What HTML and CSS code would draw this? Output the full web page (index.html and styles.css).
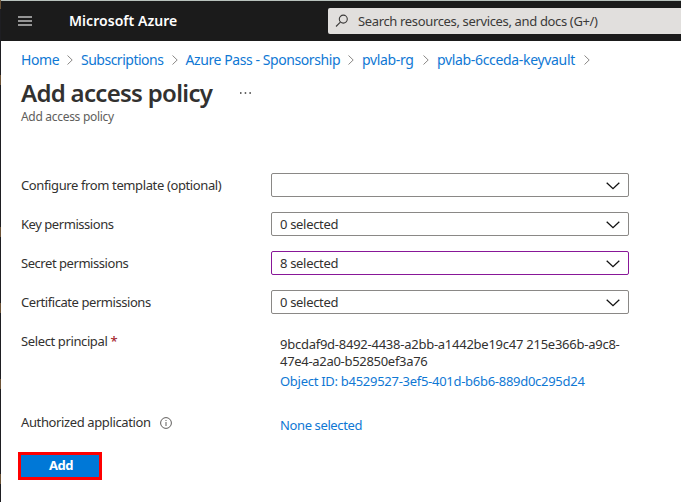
FILE: index.html
```html
<!DOCTYPE html>
<html lang="en">
<head>
<meta charset="utf-8">
<title>Add access policy - Microsoft Azure</title>
<link rel="stylesheet" href="styles.css">
</head>
<body>
<div class="edge"></div>
<div class="portal">
  <header class="topbar">
    <svg class="menu" width="14" height="10" viewBox="0 0 14 10"><path d="M0 0h14v2H0zM0 4h14v2H0zM0 8h14v2H0z" fill="#959595"/></svg>
    <div class="brand"><span>Microsoft Azure</span></div>
    <div class="search">
      <svg width="14" height="14" viewBox="0 0 14 14" fill="none" stroke="#3b3a39" stroke-width="1.1"><circle cx="8.3" cy="5.1" r="4"/><path d="M5.4 8.1 1 12.5"/></svg>
      <span>Search resources, services, and docs (G+/)</span>
    </div>
  </header>
  <nav class="crumbs">
    <a class="c1"><span>Home</span></a><svg class="sep" viewBox="0 0 6 10"><path d="m.5.5 4.7 4.5L.5 9.5"/></svg>
    <a class="c2"><span>Subscriptions</span></a><svg class="sep" viewBox="0 0 6 10"><path d="m.5.5 4.7 4.5L.5 9.5"/></svg>
    <a class="c3"><span>Azure Pass - Sponsorship</span></a><svg class="sep" viewBox="0 0 6 10"><path d="m.5.5 4.7 4.5L.5 9.5"/></svg>
    <a class="c4"><span>pvlab-rg</span></a><svg class="sep" viewBox="0 0 6 10"><path d="m.5.5 4.7 4.5L.5 9.5"/></svg>
    <a class="c5"><span>pvlab-6cceda-keyvault</span></a><svg class="sep" viewBox="0 0 6 10"><path d="m.5.5 4.7 4.5L.5 9.5"/></svg>
  </nav>
  <div class="heading">
    <h1><span>Add access policy</span></h1>
    <svg width="11" height="2" viewBox="0 0 11 2"><path d="M0 0h1.5v2H0zM4.7 0h1.5v2H4.7zM9.4 0h1.5v2H9.4z" fill="#666"/></svg>
  </div>
  <p class="subtitle"><span>Add access policy</span></p>
  <form class="form">
    <label class="l1"><span>Configure from template (optional)</span></label>
    <div class="select"><span></span><svg class="chev" viewBox="0 0 14 8"><path d="m.7.7 6.3 6 6.3-6"/></svg></div>
    <label class="l2"><span>Key permissions</span></label>
    <div class="select"><span>0 selected</span><svg class="chev" viewBox="0 0 14 8"><path d="m.7.7 6.3 6 6.3-6"/></svg></div>
    <label class="l3"><span>Secret permissions</span></label>
    <div class="select changed"><span>8 selected</span><svg class="chev" viewBox="0 0 14 8"><path d="m.7.7 6.3 6 6.3-6"/></svg></div>
    <label class="l4"><span>Certificate permissions</span></label>
    <div class="select"><span>0 selected</span><svg class="chev" viewBox="0 0 14 8"><path d="m.7.7 6.3 6 6.3-6"/></svg></div>
    <label class="l5"><span>Select principal</span> <b>*</b></label>
    <div class="principal">
      <div><span class="id1">9bcdaf9d-8492-4438-a2bb-a1442be19c47 215e366b-a9c8-</span></div>
      <div><span class="id2">47e4-a2a0-b52850ef3a76</span></div>
      <a><span class="id3">Object ID: b4529527-3ef5-401d-b6b6-889d0c295d24</span></a>
    </div>
    <label class="l6"><span>Authorized application</span>
      <svg class="info" width="12" height="12" viewBox="0 0 12 12"><circle cx="6" cy="6" r="5.4" fill="none" stroke="#605e5c"/><path d="M5.5 5h1v4h-1zM5.5 3h1v1.1h-1z" fill="#605e5c"/></svg>
    </label>
    <a class="none"><span>None selected</span></a>
  </form>
  <button class="add" type="button">Add</button>
</div>
</body>
</html>
```
FILE: styles.css
```css
* { box-sizing: border-box; }
body {
  margin: 0;
  width: 681px;
  height: 502px;
  overflow: hidden;
  display: flex;
  background: #fff;
  color: #323130;
  font: 13px/18px "Noto Sans", "Open Sans", sans-serif;
  letter-spacing: -.38px;
}
span { white-space: nowrap; }
/* sliver of the window behind the portal */
.edge {
  width: 1px;
  flex: none;
  background: linear-gradient(#6b5236 9px, #1e1e22 9px 75px, #6b5236 75px 85px, #1e1e22 85px 227px, #6b5236 227px 237px, #1e1e22 237px 303px, #6b5236 303px 313px, #1e1e22 313px 379px, #6b5236 379px 389px, #1e1e22 389px 474px, #6b5236 474px 484px, #1e1e22 484px);
}
.portal {
  flex: 1;
  min-width: 0;
  height: 502px;
  border-top: 1px solid #b8c2bd;
}
.topbar {
  height: 40px;
  display: flex;
  align-items: center;
  background: #1b1b1b;
}
.menu { margin-left: 17px; flex: none; }
.brand {
  margin-left: 37px;
  width: 259px;
  flex: none;
  color: #fff;
  font-size: 14px;
  font-weight: 600;
  letter-spacing: .05px;
}
.search {
  flex: 1;
  height: 26px;
  display: flex;
  align-items: center;
  padding-left: 7px;
  gap: 9px;
  background: #e1dfdd;
  color: #3b3a39;
  border-radius: 2px 0 0 2px;
  letter-spacing: -.35px;
}
.crumbs {
  height: 38px;
  padding-left: 20px;
  display: flex;
  align-items: center;
  font-size: 14px;
}
.crumbs a { flex: none; }
.c1 { width: 46px; }
.c2 { width: 90.5px; letter-spacing: -.5px; }
.c3 { width: 162.5px; letter-spacing: -.42px; }
.c4 { width: 61px; letter-spacing: -.33px; }
.c5 { width: 147px; letter-spacing: -.33px; }
.sep {
  width: 6px;
  height: 10px;
  margin-right: 8px;
  flex: none;
  fill: none;
  stroke: #8a8886;
}
a { color: #0f78d4; }
.heading {
  height: 28px;
  padding-left: 20px;
  display: flex;
  align-items: center;
}
h1 {
  margin: 0;
  width: 219px;
  font-size: 24px;
  line-height: 28px;
  font-weight: 600;
  letter-spacing: -.7px;
}
.subtitle {
  margin: 1px 0 0 20px;
  font-size: 12px;
  letter-spacing: -.3px;
  color: #605e5c;
}
.form {
  margin: 47px 0 0 20px;
  display: grid;
  grid-template-columns: 250px 358px;
  grid-template-rows: 24px 24px 24px 24px 66px 24px;
  row-gap: 15px;
}
label { line-height: 24px; }
label b { color: #a4262c; font-weight: 500; }
.l2, .l3 { letter-spacing: -.45px; }
.l4 { letter-spacing: -.44px; }
.select {
  display: flex;
  align-items: center;
  justify-content: space-between;
  padding: 0 8px;
  border: 1px solid #8a8886;
  border-radius: 2px;
  letter-spacing: -.32px;
}
.select.changed { border-color: #881798; }
.chev {
  width: 14px;
  height: 8px;
  margin-top: 1px;
  fill: none;
  stroke: #111;
  stroke-width: 1.3;
}
.principal { padding: 7px 0 0 9px; line-height: 17px; letter-spacing: -.25px; }
.principal a { display: block; margin-top: 3px; }
.id2 { letter-spacing: -.3px; }
.id3 { letter-spacing: -.28px; }
.none { padding: 6px 0 0 9px; }
.l6 { display: flex; align-items: center; gap: 9px; }
.info { margin-top: 1px; }
.add {
  display: block;
  width: 84px;
  height: 28px;
  margin: 18px 0 0 17px;
  padding: 0 0 2px 2px;
  border: 3px solid #f00;
  background: #0078d7;
  color: #fff;
  font: 700 13px/20px "Noto Sans", "Open Sans", sans-serif;
  letter-spacing: -.4px;
}
```
